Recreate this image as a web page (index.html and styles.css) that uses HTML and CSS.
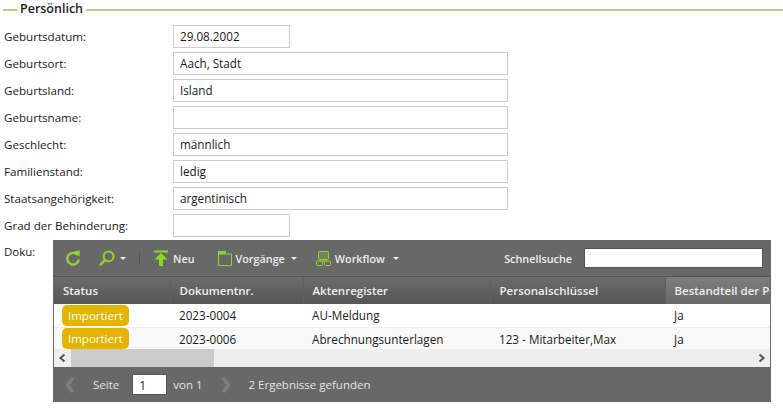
FILE: index.html
```html
<!DOCTYPE html>
<html lang="de">
  <head>
    <meta charset="UTF-8" />
    <title>Persönlich</title>
    <link rel="stylesheet" href="styles.css">
  </head>
  <body>
    <div class="legend">
      <span class="legend-text">Persönlich</span>
    </div>
    <div class="form">
      <div class="row"><label>Geburtsdatum:</label><input class="short" type="text" value="29.08.2002" /></div>
      <div class="row"><label>Geburtsort:</label><input type="text" value="Aach, Stadt" /></div>
      <div class="row"><label>Geburtsland:</label><input type="text" value="Island" /></div>
      <div class="row"><label>Geburtsname:</label><input type="text" value="" /></div>
      <div class="row"><label>Geschlecht:</label><input type="text" value="männlich" /></div>
      <div class="row"><label>Familienstand:</label><input type="text" value="ledig" /></div>
      <div class="row"><label>Staatsangehörigkeit:</label><input type="text" value="argentinisch" /></div>
      <div class="row"><label>Grad der Behinderung:</label><input class="short" type="text" value="" /></div>
    </div>
    <div class="doku">
      <div class="doku-label">Doku:</div>
      <div class="panel">
        <div class="toolbar">
          <svg class="icon refresh" width="16" height="17" viewBox="0 0 16 17">
            <path d="M12.400 4.800A5.800 5.800 0 1 0 13.800 9.500" fill="none" stroke="#97d22c" stroke-width="2.400" />
            <path d="M9 1.500l5.800-1 -0.300 6.300z" fill="#97d22c" />
          </svg>
          <svg class="icon search" width="16" height="16" viewBox="0 0 16 16">
            <circle cx="9.600" cy="6.400" r="4.900" fill="none" stroke="#97d22c" stroke-width="2" />
            <path d="M6 10.200L1.600 14.600" stroke="#97d22c" stroke-width="2.600" stroke-linecap="round" />
          </svg>
          <span class="caret search-caret"></span>
          <span class="divider"></span>
          <svg class="icon upload" width="14" height="16" viewBox="0 0 14 16">
            <path d="M0 0.500h14v2H0z" fill="#97d22c" />
            <path d="M7 3L13.600 9.400H9V16H5V9.400H0.400z" fill="#97d22c" />
          </svg>
          <span class="tool-text new">Neu</span>
          <svg class="icon folder" width="14" height="15" viewBox="0 0 14 15">
            <path d="M0.500 3h13v11.500H0.500z" fill="none" stroke="#97d22c" />
            <path d="M0 0h8v3H0z" fill="#97d22c" />
          </svg>
          <span class="tool-text">Vorgänge</span>
          <span class="caret"></span>
          <svg class="icon flow" width="15" height="15" viewBox="0 0 15 15">
            <rect x="2.500" y="0.500" width="10" height="8" rx="1" fill="#97d22c" fill-opacity="0.25" stroke="#97d22c" />
            <path d="M7.500 8.500v1.500M3.500 10h8" stroke="#97d22c" />
            <rect x="0.500" y="10" width="6" height="4.500" rx="1" fill="none" stroke="#97d22c" />
            <rect x="8.500" y="10" width="6" height="4.500" rx="1" fill="none" stroke="#97d22c" />
          </svg>
          <span class="tool-text">Workflow</span>
          <span class="caret flow-caret"></span>
          <span class="tool-text quick">Schnellsuche</span>
          <input class="quick-input" type="text" />
        </div>
        <div class="grid-wrap">
          <table class="grid">
            <thead>
              <tr>
                <th class="col-status">Status</th>
                <th class="col-nr">Dokumentnr.</th>
                <th class="col-akte">Aktenregister</th>
                <th class="col-key">Personalschlüssel</th>
                <th class="col-part sorted">Bestandteil der Personalakte</th>
              </tr>
            </thead>
            <tbody>
              <tr>
                <td><span class="badge">Importiert</span></td>
                <td>2023-0004</td>
                <td>AU-Meldung</td>
                <td></td>
                <td>Ja</td>
              </tr>
              <tr class="alt">
                <td><span class="badge">Importiert</span></td>
                <td>2023-0006</td>
                <td>Abrechnungsunterlagen</td>
                <td>123 - Mitarbeiter,Max</td>
                <td>Ja</td>
              </tr>
            </tbody>
          </table>
        </div>
        <div class="scrollbar">
          <svg class="arrow" width="17" height="18" viewBox="0 0 17 18"><path d="M10.500 5.500L6.500 9l4 3.500" fill="none" stroke="#555" stroke-width="2" /></svg>
          <div class="thumb"></div>
          <div class="track"></div>
          <svg class="arrow" width="17" height="18" viewBox="0 0 17 18"><path d="M6.500 5.500L10.500 9l-4 3.500" fill="none" stroke="#555" stroke-width="2" /></svg>
        </div>
        <div class="pager">
          <svg class="page-arrow" width="10" height="16" viewBox="0 0 10 16"><path d="M8 1L2.500 8l5.500 7" fill="none" stroke="#808080" stroke-width="3.500" /></svg>
          <span class="page-text seite">Seite</span>
          <input class="page-input" type="text" value="1" />
          <span class="page-text">von 1</span>
          <svg class="page-arrow next" width="10" height="16" viewBox="0 0 10 16"><path d="M2 1l5.500 7-5.500 7" fill="none" stroke="#808080" stroke-width="3.500" /></svg>
          <span class="page-text">2 Ergebnisse gefunden</span>
        </div>
      </div>
    </div>
  </body>
</html>
```

FILE: styles.css
```css
* {
  box-sizing: border-box;
}

body {
  margin: 0;
  background: #fff;
  color: #1a1a1a;
  font-family: "Open Sans", sans-serif;
  font-size: 11.5px;
}

.legend {
  height: 25px;
  padding: 0 0 0 3px;
  position: relative;
  display: flex;
}

.legend::before {
  content: "";
  position: absolute;
  left: 3px;
  right: 0;
  top: 9px;
  height: 2px;
  background: #b5cc8c;
}

.legend-text {
  position: relative;
  margin-left: 14px;
  padding: 0 3px;
  background: #fff;
  font-size: 12.5px;
  font-weight: 600;
  line-height: 18px;
}

.form {
  padding-left: 4px;
  margin-bottom: -1px;
}

.row {
  display: flex;
  align-items: center;
  height: 23px;
  margin-bottom: 4px;
}

.row label {
  width: 169px;
  padding-bottom: 1px;
  font-size: 11.6px;
}

.row input {
  width: 335px;
  height: 23px;
  padding: 0 6px 1px;
  border: 1px solid #ccc;
  color: #1a1a1a;
  font-family: inherit;
  font-size: 11.7px;
}

.row input.short {
  width: 117px;
}

.doku {
  display: flex;
}

.doku-label {
  width: 53px;
  padding: 0 0 0 4px;
  line-height: 24px;
}

.panel {
  width: 718px;
  height: 162px;
  background: #686868;
  border-right: 1px solid #686868;
}

.toolbar {
  display: flex;
  align-items: center;
  height: 37px;
  padding-left: 12px;
  border-bottom: 1px solid #555;
  color: #eee;
}

.icon {
  flex: none;
}

.search {
  margin-left: 18px;
}

.caret {
  width: 0;
  height: 0;
  margin-left: 6px;
  border-left: 3px solid transparent;
  border-right: 3px solid transparent;
  border-top: 3px solid #eee;
}

.search-caret {
  margin-left: 5px;
}

.flow-caret {
  margin-left: 8px;
}

.divider {
  width: 1px;
  height: 14px;
  margin: 0 14px 0 13px;
  background: #555;
}

.tool-text {
  margin-left: 4px;
  font-weight: 600;
  font-size: 10.8px;
}

.new {
  margin-left: 5px;
}

.folder {
  margin-left: 23px;
}

.flow {
  margin-left: 19px;
}

.quick {
  margin-left: auto;
  margin-right: 12px;
}

.quick-input {
  width: 179px;
  height: 20px;
  margin-right: 7px;
  border: 1px solid #555;
  background: #fff;
}

.grid-wrap {
  height: 72px;
  margin-left: 1px;
  overflow: hidden;
  background: #fff;
}

.grid {
  width: 850px;
  table-layout: fixed;
  border-collapse: collapse;
}

.grid th {
  height: 27px;
  padding: 0 9px;
  background: linear-gradient(#6c6c6c, #555);
  border-right: 1px solid #606060;
  color: #eee;
  font-size: 11.5px;
  font-weight: 600;
  text-align: left;
  white-space: nowrap;
  overflow: hidden;
}

.grid th.sorted {
  background: linear-gradient(#7d7d7d, #696969);
}

.col-status {
  width: 116px;
}

.col-nr {
  width: 133px;
}

.col-akte {
  width: 187px;
}

.col-key {
  width: 175px;
}

.col-part {
  width: 239px;
}

.grid td {
  height: 23px;
  padding: 0 9px;
  border-bottom: 1px solid #eee;
  font-size: 11.7px;
  white-space: nowrap;
}

.grid td:first-child {
  padding-left: 8px;
}

.grid .alt td {
  background: #f9f9f9;
}

.badge {
  display: inline-block;
  height: 21px;
  padding: 0 6px;
  border-radius: 5px;
  background: #e4b500;
  color: #fff;
  font-size: 11.5px;
  line-height: 21px;
  vertical-align: middle;
}

.scrollbar {
  display: flex;
  height: 18px;
  margin-left: 1px;
  background: #eee;
}

.thumb {
  width: 143px;
  background: #ccc;
}

.track {
  flex: 1;
}

.pager {
  display: flex;
  align-items: center;
  height: 35px;
  padding-left: 12px;
  color: #e4e4e4;
}

.page-text {
  white-space: nowrap;
}

.seite {
  margin-left: 18px;
}

.page-input {
  width: 35px;
  height: 21px;
  margin: 0 6px 0 13px;
  padding: 2px 0 0 6px;
  border: 1px solid #555;
  background: #fff;
  color: #1a1a1a;
  font-family: inherit;
  font-size: 12px;
}

.next {
  margin: 0 18px;
}
```
